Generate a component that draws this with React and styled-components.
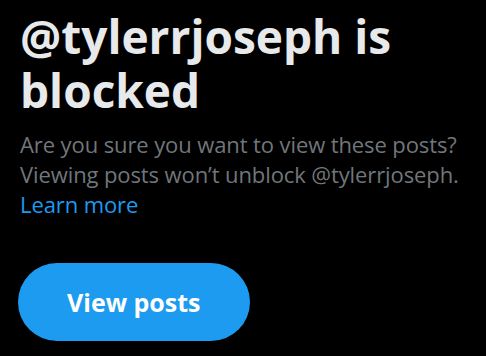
import React from 'react';
import styled, { createGlobalStyle } from 'styled-components';

const GlobalStyle = createGlobalStyle`
 html, body {
  margin: 0;
  padding: 0;
  background: #000000;
 }
 body {
  font-family: "Open Sans", "Noto Sans", sans-serif;
 }
`;

const Wrapper = styled.div`
 display: flex;
 flex-direction: column;
 align-items: flex-start;
 padding: 9px 20px 0 20px;
 width: 486px;
 height: 356px;
 box-sizing: border-box;
 overflow: hidden;
`;

const Title = styled.h1`
 margin: 0 0 12px 0;
 font-size: 46px;
 line-height: 54px;
 font-weight: 700;
 color: #e7e9ea;
`;

const Body = styled.p`
 margin: 0;
 font-size: 22px;
 line-height: 30px;
 color: #71767b;
 letter-spacing: -0.1px;
`;

const Link = styled.a`
 color: #1d9bf0;
 text-decoration: none;
`;

const Button = styled.button`
 margin-top: 44px;
 margin-left: -2px;
 height: 78px;
 padding: 0 49px;
 border: none;
 border-radius: 39px;
 background: #1d9bf0;
 color: #ffffff;
 font-family: inherit;
 font-size: 25px;
 font-weight: 700;
 cursor: pointer;
`;

export default function App() {
 return (
  <>
   <GlobalStyle />
   <Wrapper>
    <Title>@tylerrjoseph is blocked</Title>
    <Body>
     Are you sure you want to view these posts? Viewing posts won’t unblock @tylerrjoseph.{' '}
     <Link href="#">Learn more</Link>
    </Body>
    <Button>View posts</Button>
   </Wrapper>
  </>
 );
}
